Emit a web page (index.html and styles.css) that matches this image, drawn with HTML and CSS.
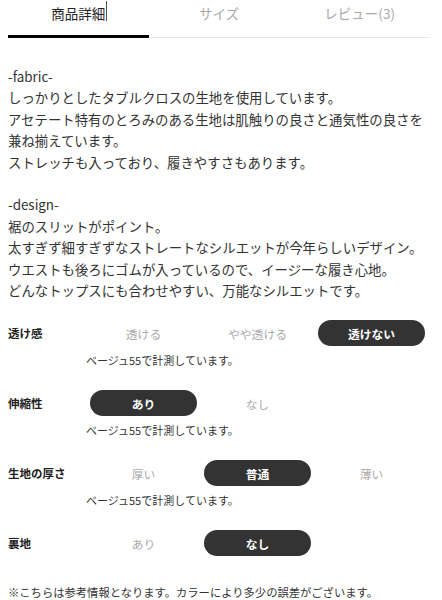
FILE: index.html
```html
<!DOCTYPE html>
<html lang="ja">
<head>
<meta charset="utf-8">
<link rel="stylesheet" href="styles.css">
</head>
<body>
<div class="tabs">
  <div class="tab active"><span class="caret">商品詳細</span></div>
  <div class="tab">サイズ</div>
  <div class="tab">レビュー(3)</div>
</div>
<div class="desc">
  <p>-fabric-<br>しっかりとしたタブルクロスの生地を使用しています。<br>アセテート特有のとろみのある生地は肌触りの良さと通気性の良さを兼ね揃えています。<br>ストレッチも入っており、履きやすさもあります。<br><br>-design-<br>裾のスリットがポイント。<br>太すぎず細すぎずなストレートなシルエットが今年らしいデザイン。<br>ウエストも後ろにゴムが入っているので、イージーな履き心地。<br>どんなトップスにも合わせやすい、万能なシルエットです。</p>
</div>
<div class="specs">
  <div class="spec">
    <div class="spec-row">
      <div class="label">透け感</div>
      <div class="opts">
        <span class="opt">透ける</span>
        <span class="opt">やや透ける</span>
        <span class="opt on">透けない</span>
      </div>
    </div>
    <div class="note">ベージュ55で計測しています。</div>
  </div>
  <div class="spec">
    <div class="spec-row">
      <div class="label">伸縮性</div>
      <div class="opts">
        <span class="opt on">あり</span>
        <span class="opt">なし</span>
      </div>
    </div>
    <div class="note">ベージュ55で計測しています。</div>
  </div>
  <div class="spec">
    <div class="spec-row">
      <div class="label">生地の厚さ</div>
      <div class="opts">
        <span class="opt">厚い</span>
        <span class="opt on">普通</span>
        <span class="opt">薄い</span>
      </div>
    </div>
    <div class="note">ベージュ55で計測しています。</div>
  </div>
  <div class="spec last">
    <div class="spec-row">
      <div class="label">裏地</div>
      <div class="opts">
        <span class="opt">あり</span>
        <span class="opt on">なし</span>
      </div>
    </div>
  </div>
</div>
<p class="footer">※こちらは参考情報となります。カラーにより多少の誤差がございます。</p>
</body>
</html>
```
FILE: styles.css
```css
* { box-sizing: border-box; }
html, body { margin: 0; padding: 0; background: #fff; }
body {
  font-family: "Noto Sans CJK JP", "Noto Sans", sans-serif;
  color: #333;
  width: 442px;
}
.tabs {
  display: flex;
  margin: 0 12px 0 8px;
}
.tab {
  flex: 1;
  text-align: center;
  font-size: 13.5px;
  line-height: 18px;
  padding: 4px 0 15px;
  color: #a8a8a8;
  border-bottom: 1px solid #e6e6e6;
}
.tab.active {
  color: #222;
  padding-bottom: 13px;
  border-bottom: 3px solid #000;
}
.caret {
  position: relative;
}
.caret::after {
  content: "";
  position: absolute;
  right: -2px;
  top: -2px;
  width: 1px;
  height: 20px;
  background: #555;
}
.desc {
  margin: 28px 8px 0;
  font-size: 13.4px;
  line-height: 21.4px;
}
.desc p { margin: 0; }
.specs {
  margin: 19px 8px 0;
}
.spec { margin-bottom: 23px; }
.spec.last { margin-bottom: 0; }
.spec-row {
  display: flex;
  align-items: center;
  height: 26px;
}
.label {
  width: 82px;
  font-size: 11.5px;
  font-weight: bold;
  color: #222;
}
.opts {
  flex: 1;
  display: grid;
  grid-template-columns: repeat(3, 107px);
  column-gap: 7px;
}
.opt {
  height: 26px;
  border-radius: 13px;
  display: flex;
  align-items: center;
  justify-content: center;
  font-size: 11.8px;
  color: #aaa;
}
.opt.on {
  background: #333;
  color: #fff;
  font-weight: bold;
}
.note {
  margin: 7px 0 0 78px;
  font-size: 11px;
  line-height: 14px;
  color: #333;
}
.footer {
  margin: 29px 8px 0;
  font-size: 11.3px;
  line-height: 15px;
  color: #333;
}
```
